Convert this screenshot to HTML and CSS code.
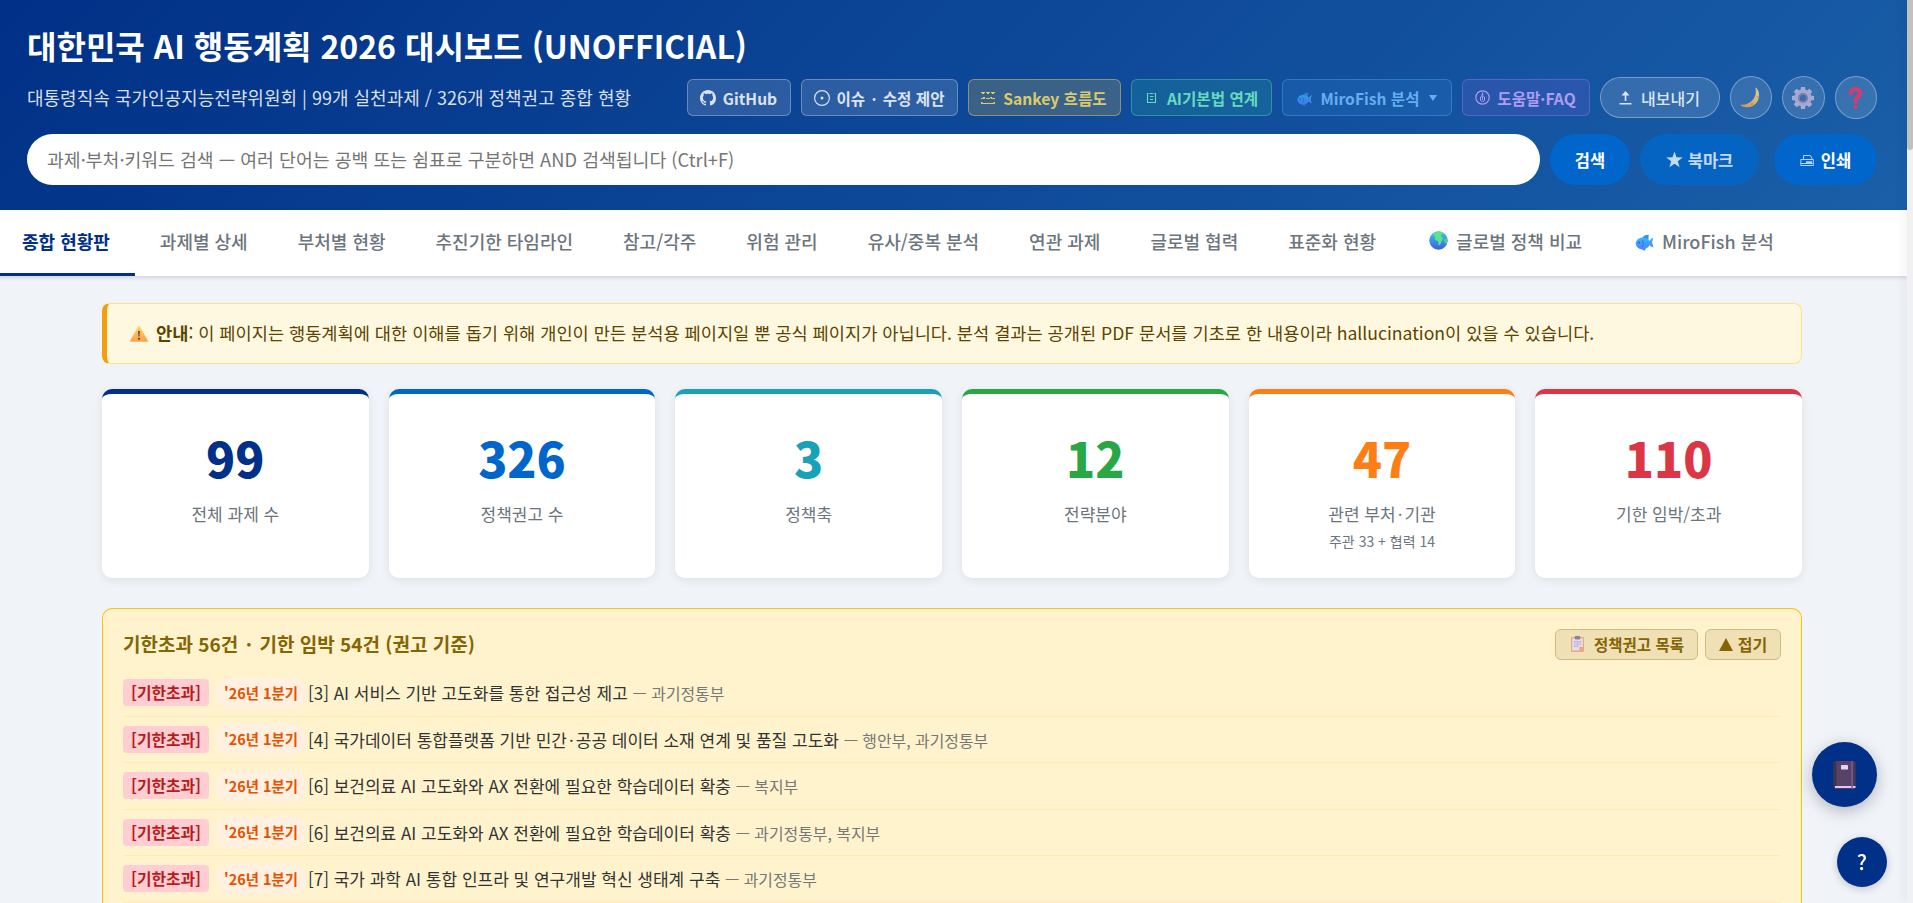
FILE: index.html
```html
<!DOCTYPE html>
<html lang="ko">
<head>
    <meta charset="UTF-8">
    <title>대한민국 AI 행동계획 2026 대시보드</title>
    <link rel="stylesheet" href="styles.css">
</head>
<body>
    <!-- 공용 아이콘 -->
    <svg class="defs" width="0" height="0">
        <defs>
            <linearGradient id="fishFill" x1="0" y1="0" x2="0" y2="1">
                <stop offset="0" stop-color="#36b7fa"/>
                <stop offset="1" stop-color="#4b83ff"/>
            </linearGradient>
            <linearGradient id="moonFill" x1="1" y1="0" x2="0" y2="1">
                <stop offset="0" stop-color="#ffe98c"/>
                <stop offset="1" stop-color="#f29a3e"/>
            </linearGradient>
            <linearGradient id="warnFill" x1="0" y1="0" x2="0" y2="1">
                <stop offset="0" stop-color="#ffd35c"/>
                <stop offset="1" stop-color="#ff9f4a"/>
            </linearGradient>
            <linearGradient id="earthFill" x1="0" y1="0" x2="0" y2="1">
                <stop offset="0" stop-color="#35c8f0"/>
                <stop offset="1" stop-color="#3f5fe0"/>
            </linearGradient>
            <symbol id="fish" viewBox="0 0 18 17">
                <path d="M7 4C8 1.600 10 .6 13.600.8 12.700 2 12.900 3.400 13.200 5.800z" fill="#2f96ea"/>
                <path d="M.2 9.500C.6 6 3.400 3.600 7 3.600c3.400 0 5.600 1.300 7.200 3.300.8-1.500 1.800-2.800 3.600-3.100-.2 1.600-1.100 3-1.100 4.600.1 1.600.9 2.900 1.100 5-1.800-.2-2.900-1-3.600-2.300-1.500 2.500-3.700 4.300-6.900 4.300C3.300 15.400.6 13 .2 9.500z" fill="url(#fishFill)"/>
                <path d="M6.500 14.800h4L8.600 17z" fill="#5f7cff"/>
                <path d="M6.800 6.200c1.200 1.800 1.200 4.400.1 6.600" fill="none" stroke="#3269db" stroke-width=".9"/>
                <circle cx="3.800" cy="8.600" r=".9" fill="#2b4fb5"/>
            </symbol>
        </defs>
    </svg>

    <header class="header">
        <h1>대한민국 AI 행동계획 2026 대시보드 (UNOFFICIAL)</h1>
        <div class="header-row">
            <p class="subtitle">대통령직속 국가인공지능전략위원회 | 99개 실천과제 / 326개 정책권고 종합 현황</p>
            <div class="header-actions">
                <a class="link-btn github">
                    <svg width="16" height="16" viewBox="0 0 16 16"><path fill="currentColor" d="M8 0C3.580 0 0 3.580 0 8c0 3.540 2.290 6.530 5.470 7.590.4.070.55-.17.55-.38 0-.19-.01-.82-.01-1.490-2.010.37-2.530-.49-2.690-.94-.09-.23-.48-.94-.82-1.130-.28-.15-.68-.52-.01-.53.63-.01 1.080.58 1.230.82.72 1.210 1.870.87 2.330.66.070-.52.28-.87.51-1.070-1.780-.2-3.640-.89-3.640-3.950 0-.87.31-1.590.82-2.150-.08-.2-.36-1.020.08-2.120 0 0 .67-.21 2.200.82.64-.18 1.320-.27 2-.27s1.360.09 2 .27c1.530-1.040 2.200-.82 2.200-.82.44 1.100.16 1.920.08 2.120.51.56.82 1.270.82 2.150 0 3.070-1.870 3.750-3.650 3.950.29.25.54.73.54 1.480 0 1.070-.01 1.930-.01 2.200 0 .21.15.46.55.38A8.010 8.010 0 0 0 16 8c0-4.420-3.580-8-8-8z"/></svg>
                    GitHub
                </a>
                <a class="link-btn issue">
                    <svg width="16" height="16" viewBox="0 0 16 16"><circle cx="8" cy="8" r="7.400" fill="none" stroke="currentColor" stroke-width="1.200"/><circle cx="8" cy="8" r="1.500" fill="currentColor"/></svg>
                    <span>이슈 <i class="dot">·</i> 수정 제안</span>
                </a>
                <a class="link-btn sankey">
                    <svg width="14" height="14" viewBox="0 0 14 14" fill="none" stroke="currentColor"><path d="M0 1.500h4M5 1.500h4M10 1.500h4M1 2.500h2M6 2.500h2M11 2.500h2M0 7.500h4M5 7.500h4M10 7.500h4M2 6.500h2M9 6.500h2M0 12.500h14M0 11.500h1.500M12.500 11.500H14"/></svg>
                    Sankey 흐름도
                </a>
                <a class="link-btn law">
                    <svg width="11" height="12" viewBox="0 0 11 12" fill="none" stroke="currentColor"><path d="M1.500 1v10M9.500 1v10M1 1.500h1.500M8.500 1.500H10M1 10.500h9M3.500 1.500h4M4 4.500h3.500M4 7.500h3" stroke-width="1.100"/></svg>
                    AI기본법 연계
                </a>
                <a class="link-btn miro">
                    <svg class="dim" width="17" height="14"><use href="#fish"/></svg>
                    MiroFish 분석
                    <span class="caret"></span>
                </a>
                <a class="link-btn faq">
                    <svg width="15" height="15" viewBox="0 0 15 15" fill="none" stroke="currentColor"><circle cx="7.500" cy="7.500" r="6.700" stroke-width="1.200"/><path d="M7.500 2.500v3M6 5.500 8.500 4M5.500 7c0-1 4-1 4 0v3.500c0 1.200-4 1.200-4 0zM7.500 7v3"/></svg>
                    도움말·FAQ
                </a>
                <button class="export-btn">
                    <svg width="13" height="14" viewBox="0 0 13 14"><path d="M6.500 0 10.500 4.500H7.300V10H5.700V4.500H2.500zM.5 12h12v1.500H.5z" fill="currentColor"/></svg>
                    내보내기
                </button>
                <button class="round-btn">
                    <svg width="22" height="22" viewBox="0 0 22 22"><path d="M16.200.8c8 8.700-1.800 25.200-15.400 17.600-.4-.3-.2-.8.300-.8C10.500 18.500 17.500 10 15.500 1.200c-.1-.5.4-.7.7-.4z" fill="url(#moonFill)"/><circle cx="17.500" cy="10" r="1" fill="#e0a347"/><circle cx="12" cy="17" r="1.300" fill="#e0a347"/></svg>
                </button>
                <button class="round-btn">
                    <svg width="22" height="22" viewBox="0 0 22 22"><g fill="#c4b9db"><path d="M9 0h4l.7 5H8.300zM9 22h4l.7-5H8.300zM0 9v4l5 .7V8.300zM22 9v4l-5 .7V8.300z"/><path d="M9 0h4l.7 5H8.300zM9 22h4l.7-5H8.300zM0 9v4l5 .7V8.300zM22 9v4l-5 .7V8.300z" transform="rotate(45 11 11)"/></g><circle cx="11" cy="11" r="6" fill="none" stroke="#c0b5d8" stroke-width="5"/><circle cx="11" cy="11" r="4.200" fill="none" stroke="#8a7fa8" stroke-width="1.600"/></svg>
                </button>
                <button class="round-btn">
                    <svg width="15" height="22" viewBox="0 0 15 22"><path d="M2.800 6C2.800 1 12.200 1 12.200 6.200c0 4-4.700 3.600-4.700 8.300" fill="none" stroke="#ee3a68" stroke-width="4.400" stroke-linecap="round"/><circle cx="7.500" cy="19.800" r="2.100" fill="#f53d55"/></svg>
                </button>
            </div>
        </div>
        <div class="search-row">
            <input class="search-input" type="text" placeholder="과제·부처·키워드 검색 — 여러 단어는 공백 또는 쉼표로 구분하면 AND 검색됩니다 (Ctrl+F)">
            <button class="pill-btn search">검색</button>
            <button class="pill-btn bookmark">
                <svg width="17" height="17" viewBox="0 0 17 17"><path d="M8.500.5l2 5.800 6.300.1-5 3.800 1.800 6.100-5.100-3.600-5.100 3.600 1.800-6.100-5-3.800 6.300-.1z" fill="currentColor"/></svg>
                북마크
            </button>
            <button class="pill-btn print">
                <svg width="14" height="12" viewBox="0 0 14 12" fill="none" stroke="#b7d3f0"><path d="M3.500 5.500v-4h7l2 4M.8 5.500h12.500v6H.8z"/><path d="M6 8.500h6" stroke-width="2.500"/><path d="M.8 9.500h12"/></svg>
                인쇄
            </button>
        </div>
    </header>

    <nav class="tabs">
        <a class="tab active">종합 현황판</a>
        <a class="tab">과제별 상세</a>
        <a class="tab">부처별 현황</a>
        <a class="tab">추진기한 타임라인</a>
        <a class="tab">참고/각주</a>
        <a class="tab">위험 관리</a>
        <a class="tab">유사/중복 분석</a>
        <a class="tab">연관 과제</a>
        <a class="tab">글로벌 협력</a>
        <a class="tab">표준화 현황</a>
        <a class="tab with-icon">
            <svg width="19" height="19" viewBox="0 0 19 19"><circle cx="9.500" cy="9.500" r="9.200" fill="url(#earthFill)"/><path d="M5 2c3-2 7-2 9 0-1 2-2.500 2-2 3.500 1.500.5 2 1.500 1.500 3.500-1.500 1-1 4-3.500 5.500-1-1.500-.5-3-1-4.500C7 9.500 6 9 6 7.500 7 6 6 5 5 5 4 4 4.500 3 5 2z" fill="#5ee388"/><path d="M15 8c1.500-.5 2.500 0 3.600 1 0 2-.8 3.500-1.600 4-1.500-1-2.500-3-2-5z" fill="#4ad0a0"/></svg>
            글로벌 정책 비교
        </a>
        <a class="tab with-icon">
            <svg class="tab-fish" width="19" height="17"><use href="#fish"/></svg>
            MiroFish 분석
        </a>
    </nav>

    <main class="container">
        <div class="notice">
            <svg width="18" height="16" viewBox="0 0 18 16"><path d="M8.200.6c.4-.6 1.200-.6 1.600 0l8 14c.3.600 0 1.100-.7 1.100H.9c-.7 0-1-.5-.7-1.100z" fill="url(#warnFill)"/><path d="M8.200 5h1.600l-.3 5.500h-1z" fill="#4a3a44"/><circle cx="9" cy="12.800" r="1" fill="#4a3a44"/></svg>
            <p><strong>안내</strong>: 이 페이지는 행동계획에 대한 이해를 돕기 위해 개인이 만든 분석용 페이지일 뿐 공식 페이지가 아닙니다. 분석 결과는 공개된 PDF 문서를 기초로 한 내용이라 hallucination이 있을 수 있습니다.</p>
        </div>

        <!-- 요약 카드 -->
        <div class="stats">
            <div class="stat-card navy">
                <div class="stat-number">99</div>
                <div class="stat-label">전체 과제 수</div>
            </div>
            <div class="stat-card blue">
                <div class="stat-number">326</div>
                <div class="stat-label">정책권고 수</div>
            </div>
            <div class="stat-card teal">
                <div class="stat-number">3</div>
                <div class="stat-label">정책축</div>
            </div>
            <div class="stat-card green">
                <div class="stat-number">12</div>
                <div class="stat-label">전략분야</div>
            </div>
            <div class="stat-card orange">
                <div class="stat-number">47</div>
                <div class="stat-label">관련 부처<i class="dot">·</i>기관</div>
                <div class="stat-sub">주관 33 + 협력 14</div>
            </div>
            <div class="stat-card red">
                <div class="stat-number">110</div>
                <div class="stat-label">기한 임박/초과</div>
            </div>
        </div>

        <!-- 기한 알림 -->
        <section class="alert-box">
            <div class="alert-head">
                <h2>기한초과 56건 <i class="dot">·</i> 기한 임박 54건 (권고 기준)</h2>
                <div class="alert-actions">
                    <button class="alert-btn list-btn">
                        <svg width="13" height="16" viewBox="0 0 13 16"><rect y="1" width="13" height="15" rx="1" fill="#f0a878"/><path d="M1.200 2.200h10.600V11L8.500 14.500H1.200z" fill="#e6dcf2"/><path d="M8.500 14.500V11h3.300z" fill="#f29a62"/><rect x="3.700" y="0" width="5.600" height="3.600" rx="1" fill="#8e8296"/><path d="M2.800 5.800h7.400M2.800 8h7.400M2.800 10.200h5" stroke="#b4a9c4"/></svg>
                        정책권고 목록
                    </button>
                    <button class="alert-btn fold-btn"><span class="triangle"></span>접기</button>
                </div>
            </div>
            <ul class="alert-list">
                <li><span class="badge">[기한초과]</span><span class="quarter">'26년 1분기</span><span class="task">[3] AI 서비스 기반 고도화를 통한 접근성 제고 <small>— 과기정통부</small></span></li>
                <li><span class="badge">[기한초과]</span><span class="quarter">'26년 1분기</span><span class="task">[4] 국가데이터 통합플랫폼 기반 민간<i class="dot">·</i>공공 데이터 소재 연계 및 품질 고도화 <small>— 행안부, 과기정통부</small></span></li>
                <li><span class="badge">[기한초과]</span><span class="quarter">'26년 1분기</span><span class="task">[6] 보건의료 AI 고도화와 AX 전환에 필요한 학습데이터 확충 <small>— 복지부</small></span></li>
                <li><span class="badge">[기한초과]</span><span class="quarter">'26년 1분기</span><span class="task">[6] 보건의료 AI 고도화와 AX 전환에 필요한 학습데이터 확충 <small>— 과기정통부, 복지부</small></span></li>
                <li><span class="badge">[기한초과]</span><span class="quarter">'26년 1분기</span><span class="task">[7] 국가 과학 AI 통합 인프라 및 연구개발 혁신 생태계 구축 <small>— 과기정통부</small></span></li>
            </ul>
        </section>
    </main>

    <!-- 플로팅 버튼 -->
    <button class="fab fab-book">
        <svg width="23" height="28" viewBox="0 0 23 28"><rect x=".5" width="22" height="28" rx="2" fill="#4a3d55"/><path d="M1 2.500C1 1 2 .3 3.500.3V25H1z" fill="#3d3448"/><rect x="3.500" y="0" width="15" height="25" fill="#57426a"/><path d="M2 25h20.500v2H2z" fill="#e3c3f0"/><rect x="18.300" width="1.500" height="28" fill="#8159a5"/><rect x="8" y="4" width="7" height="4.500" rx=".6" fill="#e0d8ea"/></svg>
    </button>
    <button class="fab fab-help">?</button>

    <div class="scrollbar"><div class="scroll-thumb"></div></div>
</body>
</html>
```
FILE: styles.css
```css
* {
    margin: 0;
    padding: 0;
    box-sizing: border-box;
}

body {
    width: 1907px;
    height: 903px;
    overflow: hidden;
    background: #f0f3f8;
    color: #333;
    font-family: "Noto Sans CJK KR", "Noto Sans", sans-serif;
    font-size: 17.6px;
}

button, input {
    font-family: inherit;
    border: none;
}

svg {
    flex-shrink: 0;
}

.defs {
    position: absolute;
}

.dot {
    margin: 0 0.12em;
    font-style: normal;
}

/* 헤더 */
.header {
    height: 210px;
    padding: 23px 30px 0 27px;
    background: linear-gradient(135deg, #003087 0%, #1a5fa8 100%);
    color: white;
}

.header h1 {
    height: 44px;
    line-height: 44px;
    font-size: 32px;
    font-weight: 700;
}

.header-row {
    height: 43px;
    margin: 9px 0 15px;
    display: flex;
    align-items: center;
    justify-content: space-between;
}

.subtitle {
    padding-bottom: 2px;
    font-size: 18px;
    color: rgba(255,255,255,0.85);
    white-space: nowrap;
}

.header-actions {
    display: flex;
    align-items: center;
    gap: 10px;
    opacity: 0.85;
}

.link-btn {
    height: 37px;
    display: flex;
    align-items: center;
    justify-content: center;
    gap: 7px;
    border: 1px solid rgba(255,255,255,0.35);
    border-radius: 6px;
    background: rgba(255,255,255,0.16);
    color: white;
    font-size: 15.6px;
    font-weight: 700;
    white-space: nowrap;
}

.github { width: 104px; }
.issue { width: 157px; }

.sankey {
    width: 153px;
    background: rgba(255,210,70,0.22);
    border-color: rgba(255,215,90,0.5);
    color: #ffe066;
    gap: 8px;
}

.law {
    width: 141px;
    padding-left: 2px;
    gap: 10px;
    background: rgba(50,190,160,0.22);
    border-color: rgba(80,220,180,0.5);
    color: #75f3c5;
}

.miro {
    width: 170px;
    background: rgba(60,145,230,0.2);
    border-color: rgba(80,165,250,0.5);
    color: #74bfff;
}

.miro .dim {
    margin-top: 3px;
    opacity: 0.9;
}

.caret {
    margin-left: 2px;
    border: 4px solid transparent;
    border-top: 6px solid currentColor;
    border-bottom: none;
}

.faq {
    width: 128px;
    background: rgba(100,95,210,0.3);
    border-color: rgba(140,110,240,0.6);
    color: #c9a9ff;
}

.export-btn {
    width: 120px;
    height: 41px;
    display: flex;
    align-items: center;
    justify-content: center;
    gap: 9px;
    border: 1px solid rgba(255,255,255,0.4);
    border-radius: 21px;
    background: rgba(255,255,255,0.16);
    color: white;
    font-size: 16px;
    font-weight: 500;
}

.round-btn {
    width: 42.500px;
    height: 43px;
    display: flex;
    align-items: center;
    justify-content: center;
    border: 1px solid rgba(255,255,255,0.4);
    border-radius: 50%;
    background: rgba(255,255,255,0.16);
}

/* 검색 영역 */
.search-row {
    display: flex;
}

.search-input {
    flex: 1;
    height: 51px;
    padding: 0 20px 1px;
    border-radius: 26px;
    background: white;
    font-size: 18.3px;
}

.search-input::placeholder {
    color: #757575;
}

.pill-btn {
    height: 51px;
    margin-left: 10px;
    display: flex;
    align-items: center;
    justify-content: center;
    gap: 5px;
    border-radius: 26px;
    background: #0066cc;
    color: white;
    font-size: 16.500px;
    font-weight: 700;
}

.search { width: 80px; }

.bookmark {
    width: 119px;
    background: #0563c1;
    color: #c3daf2;
}

.print {
    width: 103px;
    margin-left: 15px;
    gap: 7px;
}

/* 탭 메뉴 */
.tabs {
    height: 66px;
    display: flex;
    margin-left: -3px;
    background: white;
    box-shadow: 0 2px 4px rgba(0,0,0,0.12);
}

.tab {
    padding: 0 25px 2px;
    display: flex;
    align-items: center;
    border-bottom: 3px solid transparent;
    color: #6c757d;
    font-size: 18px;
    font-weight: 500;
    white-space: nowrap;
}

.tab.active {
    color: #003087;
    border-bottom-color: #003087;
    font-weight: 700;
}

.with-icon {
    gap: 8px;
    padding-left: 28px;
}

.tab-fish {
    margin-top: 3px;
}

/* 본문 */
.container {
    width: 1700px;
    margin: 27px 0 0 102px;
}

.notice {
    height: 61px;
    padding-left: 23px;
    display: flex;
    align-items: center;
    gap: 8px;
    border: 1px solid #ffe08a;
    border-left: 5px solid #f59e0b;
    border-radius: 8px;
    background: #fff8e1;
    color: #5c4400;
    white-space: nowrap;
}

.notice p {
    padding-bottom: 2px;
}

.stats {
    margin: 25px 0 30px;
    display: grid;
    grid-template-columns: repeat(6, 1fr);
    gap: 20px;
}

.stat-card {
    height: 189px;
    padding-top: 27px;
    border-top: 5px solid;
    border-radius: 10px;
    background: white;
    box-shadow: 0 2px 10px rgba(0,0,0,0.08);
    text-align: center;
}

.navy { color: #003087; }
.blue { color: #0066cc; }
.teal { color: #17a2b8; }
.green { color: #28a745; }
.orange { color: #fd7e14; }
.red { color: #dc3545; }

.stat-number {
    height: 78px;
    line-height: 72px;
    font-size: 48px;
    font-weight: 800;
}

.stat-label {
    line-height: 30px;
    color: #6c757d;
    font-size: 17px;
}

.stat-sub {
    line-height: 24px;
    color: #6c757d;
    font-size: 14px;
}

/* 알림 박스 */
.alert-box {
    height: 295px;
    padding: 20px 20px 0;
    border: 1px solid #ffc107;
    border-bottom: none;
    border-radius: 10px 10px 0 0;
    background: #fff3cd;
}

.alert-head {
    height: 31px;
    display: flex;
    align-items: center;
    justify-content: space-between;
}

.alert-head h2 {
    padding-bottom: 2px;
    color: #856404;
    font-size: 19px;
    font-weight: 700;
}

.alert-actions {
    display: flex;
    gap: 7px;
}

.alert-btn {
    height: 31px;
    padding-bottom: 1px;
    display: flex;
    align-items: center;
    justify-content: center;
    border: 1px solid #cfbc80;
    border-radius: 6px;
    background: #efe1b5;
    color: #856404;
    font-size: 15.500px;
    font-weight: 700;
}

.list-btn {
    width: 143px;
    padding-left: 2px;
    gap: 10px;
}

.fold-btn {
    width: 76px;
    gap: 5px;
    font-size: 16px;
}

.triangle {
    border: 7.500px solid transparent;
    border-bottom: 13px solid currentColor;
    border-top: none;
}

.alert-list {
    margin-top: 10px;
    list-style: none;
}

.alert-list li {
    height: 46.500px;
    display: flex;
    align-items: center;
    border-bottom: 1px solid #ffecb3;
    white-space: nowrap;
}

.badge {
    width: 86px;
    height: 27px;
    line-height: 27px;
    border-radius: 4px;
    background: #ffcdd2;
    color: #b71c1c;
    font-size: 15.8px;
    font-weight: 700;
    text-align: center;
}

.quarter {
    width: 92px;
    height: 30px;
    margin: 0 1px 0 6px;
    line-height: 30px;
    border-radius: 15px;
    background: #fff0e0;
    color: #e65100;
    font-size: 14.4px;
    font-weight: 700;
    text-align: center;
}

.task {
    font-size: 17px;
}

.task small {
    color: #777;
    font-size: 15.9px;
}

/* 플로팅 버튼 */
.fab {
    position: fixed;
    display: flex;
    align-items: center;
    justify-content: center;
    border-radius: 50%;
    background: #003087;
    color: white;
}

.fab-book {
    left: 1812px;
    top: 742px;
    width: 65px;
    height: 65px;
    box-shadow: 0 4px 16px rgba(0,0,0,0.25);
}

.fab-help {
    left: 1837px;
    top: 837px;
    width: 50px;
    height: 50px;
    padding-bottom: 2px;
    box-shadow: 0 2px 8px rgba(0,0,0,0.2);
    font-size: 21px;
    font-weight: 500;
}

.scrollbar {
    position: fixed;
    top: 0;
    right: 0;
    width: 6px;
    height: 100%;
    background: #f1f1f1;
    box-shadow: -2px 0 12px rgba(0,0,0,0.08);
}

.scroll-thumb {
    height: 150px;
    border-radius: 0 0 3px 3px;
    background: #c1c1c1;
}
```
